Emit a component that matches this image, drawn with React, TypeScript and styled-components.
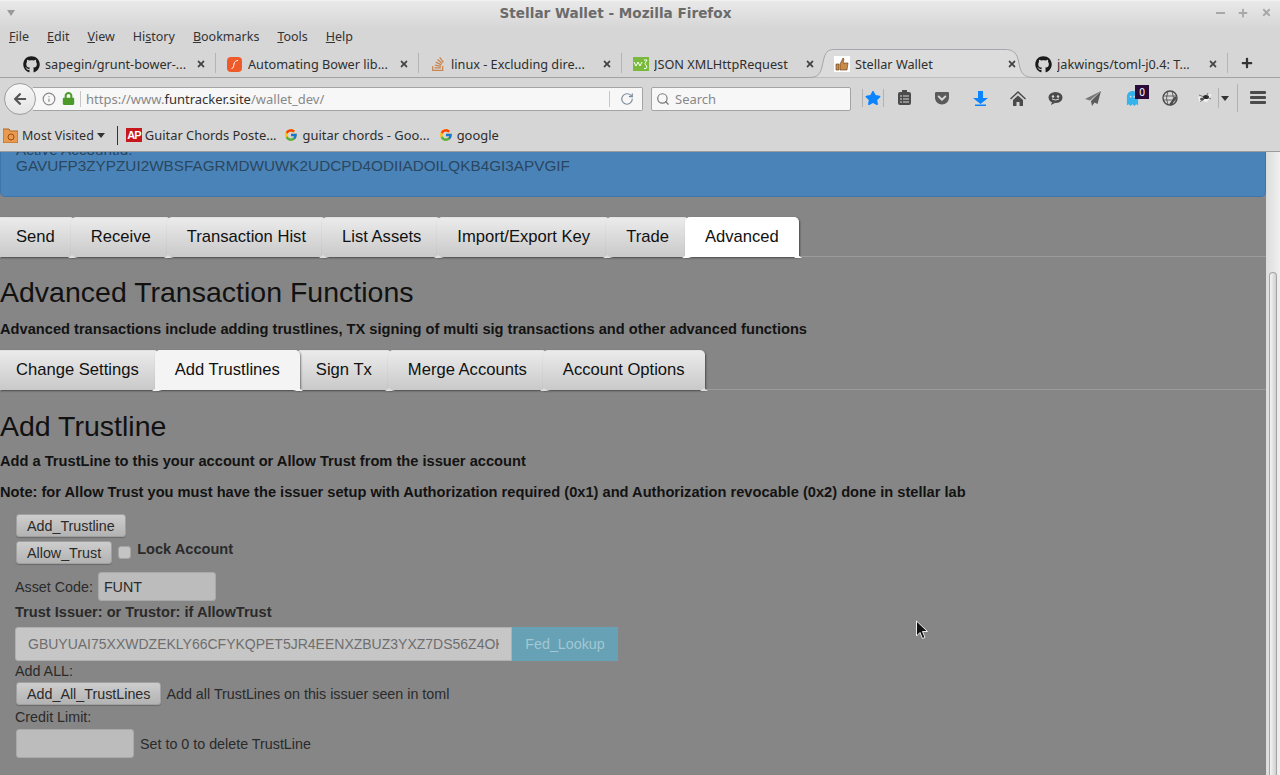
import * as React from "react";
import styled, { createGlobalStyle } from "styled-components";
import { FaGithub, FaStackOverflow, FaGhost, FaGetPocket, FaStar, FaLock, FaPlus, FaTimes, FaArrowLeft } from "react-icons/fa";
import { FcGoogle } from "react-icons/fc";
import { Info, Search, RotateCw } from "lucide-react";

const GlobalStyle = createGlobalStyle`
  html, body { margin: 0; padding: 0; height: 775px; overflow: hidden; background: #868686; }
  * { box-sizing: border-box; }
`;

const uiFont = `"Noto Sans", "Open Sans", sans-serif`;
const pageFont = `"Liberation Sans", Arial, sans-serif`;

const Window = styled.div`
  width: 1280px;
  height: 775px;
  display: flex;
  flex-direction: column;
  overflow: hidden;
`;

const Chrome = styled.header`
  height: 152px;
  flex: none;
  display: flex;
  flex-direction: column;
  font-family: ${uiFont};
  font-size: 12.7px;
  color: #2e2e2e;
  background: #d6d6d6;
  border-bottom: 1px solid #9c9c9c;
`;

const TitleBar = styled.div`
  height: 27px;
  flex: none;
  display: flex;
  align-items: center;
  padding: 0 8px 3px 7px;
  background: linear-gradient(#e9e9e9, #d7d7d7);
  border-top: 1px solid #f2f2f2;
`;

const Title = styled.div`
  flex: 1;
  text-align: center;
  font: bold 13.6px "DejaVu Sans", sans-serif;
  color: #6b6b6b;
`;

const WindowDropdown = styled.span`
  width: 0;
  height: 0;
  border: 4px solid transparent;
  border-top: 6px solid #9a9a9a;
  border-bottom: 0;
`;

const WinButtons = styled.div`
  display: flex;
  gap: 13px;
  color: #a8a8a8;
  font-size: 10px;
  align-items: center;
`;

const Dash = styled.span`
  width: 9px;
  height: 2px;
  background: #a8a8a8;
`;

const MenuBar = styled.nav`
  height: 22px;
  flex: none;
  display: flex;
  align-items: center;
  gap: 18px;
  padding: 0 0 3px 9px;
  color: #333;
  font-size: 12.5px;
`;

const MenuItem = styled.span`
  u { text-decoration: underline; text-underline-offset: 1px; }
`;

const TabStrip = styled.div`
  height: 29px;
  flex: none;
  display: flex;
  align-items: stretch;
  padding-left: 14px;
  border-bottom: 1px solid #a2a2a2;
`;

const Tab = styled.div<{ $active?: boolean; $noSep?: boolean }>`
  width: ${(p) => (p.$active ? 200 : 203)}px;
  flex: none;
  height: 29px;
  display: flex;
  align-items: center;
  padding: 1px ${(p) => (p.$active ? 7 : 9)}px 0 ${(p) => (p.$active ? 7 : 9)}px;
  white-space: nowrap;
  position: relative;
  ${(p) =>
    p.$noSep
      ? ""
      : `&::after{content:"";position:absolute;right:1px;top:4px;height:20px;width:1px;background:#b4b4b4;}`}
`;

const ActiveTabShape = styled.svg`
  position: absolute;
  left: -18px;
  top: 0;
  width: 226px;
  height: 29px;
`;

const TabIcon = styled.span`
  width: 17px;
  height: 17px;
  flex: none;
  display: flex;
  align-items: center;
  justify-content: center;
  margin-right: 5px;
  position: relative;
`;

const TabLabel = styled.span`
  flex: 1;
  overflow: hidden;
  position: relative;
`;

const TabClose = styled(FaTimes)`
  flex: none;
  font-size: 10px;
  color: #444;
  margin-right: 2px;
  position: relative;
`;

const NewTab = styled.div`
  display: flex;
  align-items: center;
  padding-left: 12px;
  color: #333;
  font-size: 12px;
`;

const NavBar = styled.div`
  height: 41px;
  flex: none;
  display: flex;
  align-items: center;
  padding: 0 0 0 4px;
`;

const BackButton = styled.div`
  width: 32px;
  height: 32px;
  flex: none;
  border-radius: 50%;
  background: linear-gradient(#f7f7f7, #e4e4e4);
  border: 1px solid #9d9d9d;
  display: flex;
  align-items: center;
  justify-content: center;
  color: #555;
  font-size: 14px;
  position: relative;
  z-index: 1;
`;

const UrlBar = styled.div`
  width: 610px;
  height: 24px;
  margin-left: -3px;
  flex: none;
  background: #f7f7f7;
  border: 1px solid #a4a4a4;
  border-left: 0;
  border-radius: 0 2px 2px 0;
  display: flex;
  align-items: center;
  padding-left: 9px;
`;

const UrlDivider = styled.span`
  width: 1px;
  height: 16px;
  background: #c6c6c6;
  margin: 0 5px;
`;

const UrlText = styled.span`
  flex: 1;
  color: #888;
  font-size: 13px;
  b { font-weight: 400; color: #333; }
`;

const SearchBox = styled.div`
  width: 200px;
  height: 24px;
  margin-left: 8px;
  flex: none;
  background: #f7f7f7;
  border: 1px solid #a4a4a4;
  border-radius: 2px;
  display: flex;
  align-items: center;
  gap: 5px;
  padding-left: 4px;
  color: #888;
  font-size: 13px;
`;

const ToolIcons = styled.div`
  display: flex;
  align-items: center;
  height: 100%;
  flex: 1;
  position: relative;
`;

const ToolIcon = styled.span<{ $left: number; $color?: string }>`
  position: absolute;
  top: 11px;
  left: ${(p) => p.$left}px;
  width: 18px;
  height: 18px;
  display: flex;
  align-items: center;
  justify-content: center;
  color: ${(p) => p.$color || "#4b4b4b"};
`;

const ToolSep = styled.span<{ $left: number; $h?: number }>`
  position: absolute;
  left: ${(p) => p.$left}px;
  top: ${(p) => 20 - (p.$h || 18) / 2}px;
  width: 1px;
  height: ${(p) => p.$h || 18}px;
  background: #b2b2b2;
`;

const Badge = styled.span`
  position: absolute;
  left: 284px;
  top: 7px;
  width: 14px;
  height: 14px;
  background: #2a0b3a;
  color: #fff;
  font-size: 10px;
  line-height: 14px;
  text-align: center;
`;

const BookmarksBar = styled.div`
  height: 32px;
  flex: none;
  display: flex;
  align-items: center;
  padding-left: 3px;
  color: #2e2e2e;
  font-size: 12.9px;
`;

const Bookmark = styled.span<{ $left?: number; $gap?: number; $size?: number }>`
  display: flex;
  align-items: center;
  gap: ${(p) => p.$gap ?? 5}px;
  margin-left: ${(p) => p.$left ?? 0}px;
  white-space: nowrap;
  ${(p) => (p.$size ? `font-size:${p.$size}px;` : "")}
`;

const Caret = styled.span`
  width: 0;
  height: 0;
  border: 4px solid transparent;
  border-top: 5px solid #333;
  border-bottom: 0;
  margin-left: -1px;
`;

const BarDivider = styled.span`
  width: 1px;
  height: 19px;
  background: #333;
  margin: 0 8px 0 12px;
`;

const ApLogo = styled.span`
  width: 16px;
  height: 14px;
  background: #c8161d;
  color: #fff;
  font: bold 11px/14px ${pageFont};
  text-align: center;
  letter-spacing: -1px;
`;

const Viewport = styled.div`
  flex: 1;
  min-height: 0;
  display: flex;
  background: #868686;
`;

const Page = styled.main`
  width: 1266px;
  flex: none;
  overflow: hidden;
  font-family: ${pageFont};
  color: #131313;
`;

const Scrollbar = styled.aside`
  flex: 1;
  background: linear-gradient(90deg, #dcdcdc, #f0f0f0);
  padding: 120px 3px 0;
`;

const ScrollThumb = styled.div`
  height: 100%;
  background: linear-gradient(90deg, #f4f4f4, #cfcfcf);
  border: 1px solid #a5a5a5;
  border-bottom: 0;
  border-radius: 6px 6px 0 0;
`;

const Banner = styled.section`
  height: 45px;
  background: #4a83b8;
  border: 1px solid #3e76ab;
  border-top: 0;
  border-radius: 0 0 5px 5px;
  padding-left: 15px;
  color: #2a4760;
  font-size: 15.3px;
  line-height: 16px;
  overflow: hidden;
`;

const BannerLine = styled.div<{ $clipped?: boolean }>`
  margin-top: ${(p) => (p.$clipped ? -10 : 0)}px;
`;

const TabRow = styled.div<{ $top: number }>`
  margin-top: ${(p) => p.$top}px;
  height: 40px;
  display: flex;
  border-bottom: 1px solid #9b9b9b;
`;

const PageTab = styled.div<{ $active?: string; $first?: boolean }>`
  height: 40px;
  padding: 0 20px 1px;
  margin-right: -4px;
  margin-left: ${(p) => (p.$first ? -4 : 0)}px;
  flex: none;
  display: flex;
  align-items: center;
  white-space: nowrap;
  font-size: 16.6px;
  color: #111;
  border-radius: 5px 5px 0 0;
  background: ${(p) => p.$active ?? "linear-gradient(#ebebeb, #c9c9c9)"};
  box-shadow: 1px 1px 2px rgba(0, 0, 0, 0.45);
  border-top: 1px solid ${(p) => p.$active ?? "#e2e2e2"};
  position: relative;
  z-index: ${(p) => (p.$active ? 1 : 0)};
  &::before,
  &::after {
    content: "";
    position: absolute;
    bottom: -1px;
    width: 0;
    height: 0;
    border-left: 4px solid transparent;
    border-right: 4px solid transparent;
    border-bottom: 3px solid ${(p) => p.$active ?? "#dedede"};
  }
  &::before { left: -3px; }
  &::after { right: -3px; }
`;

const H1 = styled.h1<{ $top: number }>`
  margin: ${(p) => p.$top}px 0 0;
  font-size: 28.5px;
  line-height: 33px;
  font-weight: 400;
  color: #111;
`;

const Lead = styled.p<{ $top: number }>`
  margin: ${(p) => p.$top}px 0 0;
  font-size: 14.65px;
  line-height: 17px;
  font-weight: 700;
  color: #131313;
`;

const Form = styled.div`
  margin-top: 13px;
  padding-left: 15px;
  font-size: 14.3px;
  color: #2a2a2a;
  display: flex;
  flex-direction: column;
  align-items: flex-start;
`;

const Row = styled.div<{ $gap?: number; $top?: number }>`
  display: flex;
  align-items: center;
  gap: ${(p) => p.$gap ?? 5}px;
  margin-top: ${(p) => p.$top ?? 0}px;
`;

const GreyButton = styled.button`
  height: 23px;
  padding: 0 10px;
  margin-left: 1px;
  border: 1px solid #a0a0a0;
  border-radius: 3px;
  background: linear-gradient(#cdcdcd, #b3b3b3);
  box-shadow: 0 1px 1px rgba(0, 0, 0, 0.2);
  font: 14.3px ${pageFont};
  color: #2b2b2b;
`;

const CheckBox = styled.span`
  width: 13px;
  height: 13px;
  background: #c4c4c4;
  border-radius: 3px;
  border: 1px solid #a4a4a4;
`;

const LockLabel = styled.b`
  font-size: 14.6px;
  margin-top: -7px;
  color: #2a2a2a;
`;

const TextBox = styled.div<{ $w: number; $h: number; $left?: number }>`
  width: ${(p) => p.$w}px;
  height: ${(p) => p.$h}px;
  margin-left: ${(p) => p.$left ?? 0}px;
  flex: none;
  background: #bcbcbc;
  border: 1px solid #a9a9a9;
  border-radius: 3px;
  display: flex;
  align-items: center;
  padding-left: 5px;
  font-size: 14.3px;
  color: #2a2a2a;
`;

const BoldLabel = styled.b`
  margin-top: 2px;
  line-height: 18px;
  font-size: 14.6px;
`;

const Plain = styled.span<{ $top?: number }>`
  line-height: 16px;
  margin-top: ${(p) => p.$top ?? 0}px;
`;

const IssuerGroup = styled.div`
  display: flex;
  margin-top: 6px;
  width: 603px;
  height: 34px;
`;

const IssuerInput = styled.div`
  width: 497px;
  flex: none;
  background: #c6c6c6;
  border: 1px solid #b0b0b0;
  border-radius: 3px 0 0 3px;
  color: #6e6e6e;
  display: flex;
  align-items: center;
  padding: 0 12px;
  white-space: nowrap;
  font-size: 14px;
`;

const IssuerValue = styled.span`
  display: block;
  width: 100%;
  overflow: hidden;
`;

const FedButton = styled.div`
  flex: 1;
  background: #66a1b5;
  color: #a3c7d3;
  font-size: 14.3px;
  display: flex;
  align-items: center;
  justify-content: center;
`;

const Cursor = styled.svg`
  position: absolute;
  left: 915px;
  top: 620px;
`;

const tabs = [
  { icon: <FaGithub size={17} color="#1a1a1a" />, label: "sapegin/grunt-bower-..." },
  { icon: <svg width="15" height="15" viewBox="0 0 15 15"><rect width="15" height="15" rx="4" fill="#ef5a2a" /><path d="M4.500 11.500c2 0 2-2 2.500-4.500S9 3.500 11 3.500" stroke="#fff" fill="none" /></svg>, label: "Automating Bower lib..." },
  { icon: <FaStackOverflow size={16} color="#c88550" />, label: "linux - Excluding dire..." },
  { icon: <svg width="16" height="14" viewBox="0 0 16 14"><rect width="16" height="14" fill="#79b93c" /><path d="M1 5l2 4 2-4 2 4 2-4" stroke="#fff" fill="none" /><path d="M11 3h3l-2 3.500 2 3.500-1 1.500h-2" stroke="#fff" fill="none" /></svg>, label: "JSON XMLHttpRequest", noSep: true },
  { icon: <svg width="16" height="16" viewBox="0 0 16 16"><rect width="16" height="16" fill="#fff" /><path d="M2 8h3v6H2zM6 8l3-6 1 1-1 4h5l-1 7H6z" fill="#c98a4e" stroke="#5a3a1a" strokeWidth=".6" /></svg>, label: "Stellar Wallet", active: true, noSep: true },
  { icon: <FaGithub size={17} color="#1a1a1a" />, label: "jakwings/toml-j0.4: T..." },
];

const pageTabs = ["Send", "Receive", "Transaction Hist", "List Assets", "Import/Export Key", "Trade", "Advanced"];
const subTabs = ["Change Settings", "Add Trustlines", "Sign Tx", "Merge Accounts", "Account Options"];

export default function App() {
  return (
    <Window>
      <GlobalStyle />
      <Chrome>
        <TitleBar>
          <WindowDropdown />
          <Title>Stellar Wallet - Mozilla Firefox</Title>
          <WinButtons>
            <Dash />
            <FaPlus />
            <FaTimes size={11} />
          </WinButtons>
        </TitleBar>
        <MenuBar>
          <MenuItem><u>F</u>ile</MenuItem>
          <MenuItem><u>E</u>dit</MenuItem>
          <MenuItem><u>V</u>iew</MenuItem>
          <MenuItem>Hi<u>s</u>tory</MenuItem>
          <MenuItem><u>B</u>ookmarks</MenuItem>
          <MenuItem><u>T</u>ools</MenuItem>
          <MenuItem><u>H</u>elp</MenuItem>
        </MenuBar>
        <TabStrip>
          {tabs.map((t) => (
            <Tab key={t.label} $active={t.active} $noSep={t.noSep}>
              {t.active && (
                <ActiveTabShape viewBox="0 0 226 29">
                  <path d="M0 28.500C9 28.500 12 26 14 18L16 9C18 2 21 .5 27 .5L197 .5C204 .5 208 3 210 10L212 19C214 26 218 28.500 226 28.500" fill="#dcdcdc" stroke="#a4a8ac" />
                </ActiveTabShape>
              )}
              <TabIcon>{t.icon}</TabIcon>
              <TabLabel>{t.label}</TabLabel>
              <TabClose />
            </Tab>
          ))}
          <NewTab><FaPlus /></NewTab>
        </TabStrip>
        <NavBar>
          <BackButton><FaArrowLeft /></BackButton>
          <UrlBar>
            <Info size={14} color="#888" />
            <FaLock size={13} color="#4c9a2a" style={{ marginLeft: 6 }} />
            <UrlDivider />
            <UrlText>https://www.<b>funtracker.site</b>/wallet_dev/</UrlText>
            <UrlDivider />
            <RotateCw size={14} color="#7b8a99" style={{ margin: "0 8px 0 5px" }} />
          </UrlBar>
          <SearchBox>
            <Search size={14} color="#777" />
            Search
          </SearchBox>
          <ToolIcons>
            <ToolSep $left={11} />
            <ToolIcon $left={13} $color="#0a84ff"><FaStar size={16} /></ToolIcon>
            <ToolSep $left={32} />
            <ToolIcon $left={44}>
              <svg width="15" height="16" viewBox="0 0 15 16"><rect x="1" y="2" width="13" height="13" rx="2" fill="#4b4b4b" /><rect x="5" y="0" width="5" height="3" fill="#4b4b4b" /><path d="M3 6h2M6 6h6M3 9h2M6 9h6M3 12h2M6 12h6" stroke="#d6d6d6" /></svg>
            </ToolIcon>
            <ToolIcon $left={82} $color="#5a5a5a"><FaGetPocket size={16} /></ToolIcon>
            <ToolIcon $left={120}>
              <svg width="15" height="15" viewBox="0 0 15 15"><path d="M5 0h5v7h5l-7.500 6L0 7h5z" fill="#0a84ff" /><rect x="2" y="13.500" width="11" height="1.500" fill="#0a84ff" /></svg>
            </ToolIcon>
            <ToolIcon $left={158}>
              <svg width="16" height="15" viewBox="0 0 16 15"><path d="M8 0L0 7.500l1 1L8 2l7 6.500 1-1z" fill="#4b4b4b" /><path d="M3 9l5-4.500L13 9v6H9.500v-4h-3v4H3z" fill="#4b4b4b" /></svg>
            </ToolIcon>
            <ToolIcon $left={195}>
              <svg width="15" height="15" viewBox="0 0 15 15"><ellipse cx="7.500" cy="6.500" rx="7" ry="5.500" fill="#4b4b4b" /><path d="M4 11l-1 3 4-2z" fill="#4b4b4b" /><circle cx="5" cy="5.500" r="1.200" fill="#d6d6d6" /><circle cx="10" cy="5.500" r="1.200" fill="#d6d6d6" /><path d="M4 8q3.500 2 7 0" stroke="#d6d6d6" fill="none" /></svg>
            </ToolIcon>
            <ToolIcon $left={233}>
              <svg width="16" height="15" viewBox="0 0 16 15"><path d="M16 0L0 8l5 1.500z" fill="#777" /><path d="M16 0L6 10l1 5 2.500-3.500 3 1.500z" fill="#5a5a5a" /></svg>
            </ToolIcon>
            <ToolIcon $left={272} $color="#35b3ea"><FaGhost size={15} /></ToolIcon>
            <Badge>0</Badge>
            <ToolIcon $left={310}>
              <svg width="16" height="16" viewBox="0 0 16 16" fill="none" stroke="#4b4b4b"><circle cx="8" cy="8" r="7" strokeWidth="1.400" /><path d="M1 6h14M1 10h14M6 1q-3 7 0 14M10 1q3 7 0 14" strokeWidth=".8" /><path d="M8 15l6-8" strokeWidth="2.200" /></svg>
            </ToolIcon>
            <ToolIcon $left={345}>
              <svg width="16" height="12" viewBox="0 0 16 12" fill="none"><path d="M1 5l14-3-5 8-4-1-3 2z" fill="#f2f2f2" /><ellipse cx="9" cy="5" rx="3" ry="2" fill="#2a2a2a" /><ellipse cx="5" cy="7" rx="2" ry="1.500" fill="#555" /><path d="M2 3l5 2M3 10l4-3M11 1L9 4M14 7l-4-2" stroke="#444" strokeWidth=".7" /></svg>
            </ToolIcon>
            <ToolSep $left={367} $h={20} />
            <ToolIcon $left={365}><Caret /></ToolIcon>
            <ToolSep $left={386} $h={28} />
            <ToolIcon $left={398}>
              <svg width="16" height="14" viewBox="0 0 16 14" fill="#4b4b4b"><rect y="0" width="16" height="3" rx="1" /><rect y="5" width="16" height="3" rx="1" /><rect y="10" width="16" height="3" rx="1" /></svg>
            </ToolIcon>
          </ToolIcons>
        </NavBar>
        <BookmarksBar>
          <Bookmark $size={12.5} $gap={4}>
            <svg width="15" height="15" viewBox="0 0 15 15"><path d="M0 1h6l1 2h8v12H0z" fill="#e89a50" stroke="#b06a20" /><circle cx="8" cy="9" r="3" fill="none" stroke="#a04a10" /></svg>
            Most Visited
            <Caret />
          </Bookmark>
          <BarDivider />
          <Bookmark $gap={3}><ApLogo>AP</ApLogo>Guitar Chords Poste...</Bookmark>
          <Bookmark $left={7}><FcGoogle size={14} />guitar chords - Goo...</Bookmark>
          <Bookmark $left={9} $gap={4}><FcGoogle size={14} />google</Bookmark>
        </BookmarksBar>
      </Chrome>
      <Viewport>
        <Page>
          <Banner>
            <BannerLine $clipped>Active Accountid:</BannerLine>
            <BannerLine>GAVUFP3ZYPZUI2WBSFAGRMDWUWK2UDCPD4ODIIADOILQKB4GI3APVGIF</BannerLine>
          </Banner>
          <TabRow $top={20}>
            {pageTabs.map((t, i) => (
              <PageTab key={t} $first={i === 0} $active={t === "Advanced" ? "#fff" : undefined}>{t}</PageTab>
            ))}
          </TabRow>
          <H1 $top={19}>Advanced Transaction Functions</H1>
          <Lead $top={12}>Advanced transactions include adding trustlines, TX signing of multi sig transactions and other advanced functions</Lead>
          <TabRow $top={12}>
            {subTabs.map((t, i) => (
              <PageTab key={t} $first={i === 0} $active={t === "Add Trustlines" ? "#f4f4f4" : undefined}>{t}</PageTab>
            ))}
          </TabRow>
          <H1 $top={20}>Add Trustline</H1>
          <Lead $top={10}>Add a TrustLine to this your account or Allow Trust from the issuer account</Lead>
          <Lead $top={14}>Note: for Allow Trust you must have the issuer setup with Authorization required (0x1) and Authorization revocable (0x2) done in stellar lab</Lead>
          <Form>
            <GreyButton>Add_Trustline</GreyButton>
            <Row $top={4} $gap={6}>
              <GreyButton>Allow_Trust</GreyButton>
              <CheckBox />
              <LockLabel>Lock Account</LockLabel>
            </Row>
            <Row $top={8} $gap={5}>
              <span>Asset Code:</span>
              <TextBox $w={118} $h={29}>FUNT</TextBox>
            </Row>
            <BoldLabel>Trust Issuer: or Trustor: if AllowTrust</BoldLabel>
            <IssuerGroup>
              <IssuerInput><IssuerValue>GBUYUAI75XXWDZEKLY66CFYKQPET5JR4EENXZBUZ3YXZ7DS56Z4OK</IssuerValue></IssuerInput>
              <FedButton>Fed_Lookup</FedButton>
            </IssuerGroup>
            <Plain $top={2}>Add ALL:</Plain>
            <Row $top={3}>
              <GreyButton>Add_All_TrustLines</GreyButton>
              <span>Add all TrustLines on this issuer seen in toml</span>
            </Row>
            <Plain $top={4}>Credit Limit:</Plain>
            <Row $top={4} $gap={6}>
              <TextBox $w={118} $h={29} $left={1} />
              <span>Set to 0 to delete TrustLine</span>
            </Row>
          </Form>
        </Page>
        <Scrollbar><ScrollThumb /></Scrollbar>
      </Viewport>
      <Cursor width="14" height="21" viewBox="0 0 14 21">
        <path d="M1.500 1v15l3.500-3.500 2.500 6 2.500-1-2.500-6h5z" fill="#111" stroke="#eee" strokeWidth="1" />
      </Cursor>
    </Window>
  );
}
